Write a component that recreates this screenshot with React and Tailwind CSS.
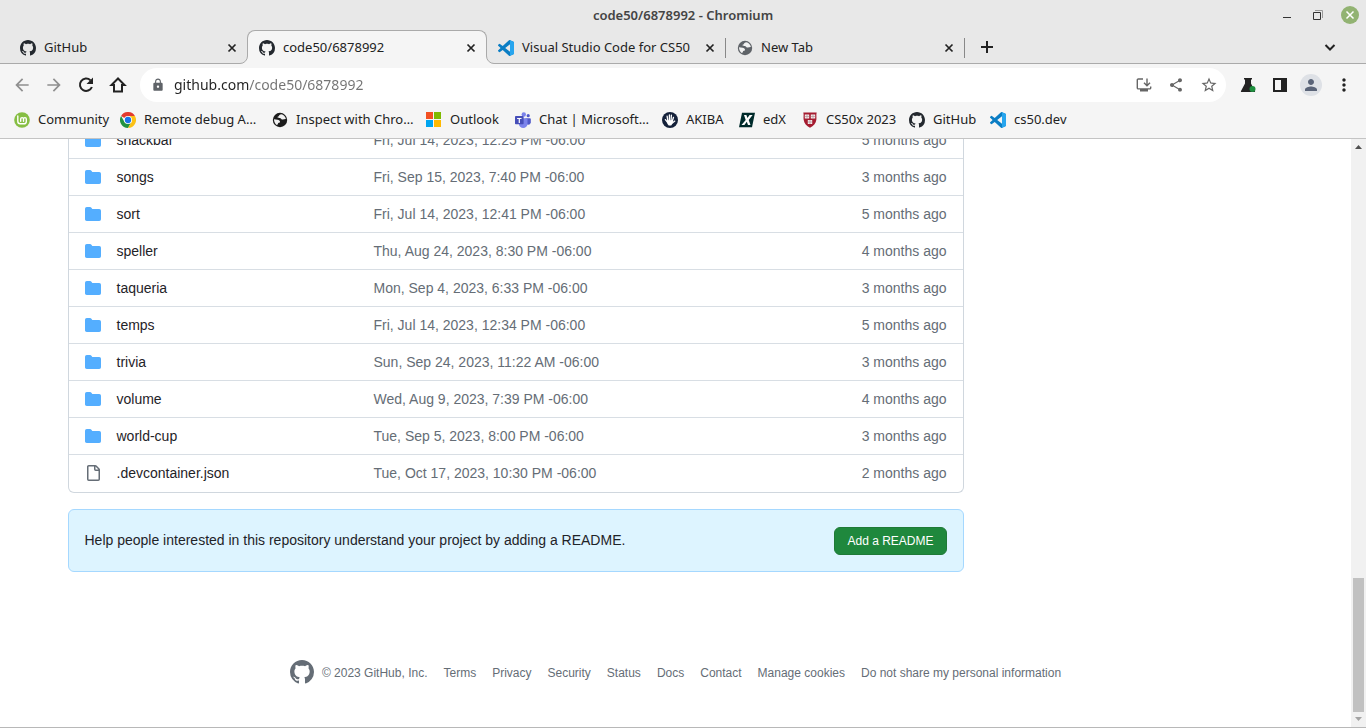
import React from "react";
import { MdArrowBack, MdArrowForward, MdLock, MdShare, MdStarBorder, MdPerson, MdMoreVert } from "react-icons/md";

function GitHubMark({ className }) {
  return (
    <svg viewBox="0 0 16 16" fill="currentColor" className={className} aria-hidden="true">
      <path d="M8 0c4.42 0 8 3.58 8 8a8.013 8.013 0 0 1-5.45 7.59c-.4.08-.55-.17-.55-.38 0-.27.01-1.13.01-2.2 0-.75-.25-1.23-.54-1.48 1.78-.2 3.65-.88 3.65-3.95 0-.88-.31-1.59-.82-2.15.08-.2.36-1.02-.08-2.12 0 0-.67-.22-2.2.82-.64-.18-1.32-.27-2-.27-.68 0-1.36.09-2 .27-1.53-1.03-2.2-.82-2.2-.82-.44 1.1-.16 1.92-.08 2.12-.51.56-.82 1.28-.82 2.15 0 3.06 1.86 3.75 3.64 3.95-.23.2-.44.55-.51 1.07-.46.21-1.61.55-2.33-.66-.15-.24-.6-.83-1.23-.82-.67.01-.27.38.01.53.34.19.73.9.82 1.13.16.45.68 1.31 2.69.94 0 .67.01 1.3.01 1.49 0 .21-.15.45-.55.38A7.995 7.995 0 0 1 0 8c0-4.42 3.58-8 8-8Z" />
    </svg>
  );
}

const VS_PATH =
  "M23.15 2.587L18.21.21a1.494 1.494 0 0 0-1.705.29l-9.46 8.63-4.12-3.128a.999.999 0 0 0-1.276.057L.327 7.261A1 1 0 0 0 .326 8.74L3.899 12 .326 15.26a1 1 0 0 0 .001 1.479L1.65 17.94a.999.999 0 0 0 1.276.057l4.12-3.128 9.46 8.63a1.492 1.492 0 0 0 1.704.29l4.942-2.377A1.5 1.5 0 0 0 24 20.06V3.939a1.5 1.5 0 0 0-.85-1.352zm-5.146 14.861L10.826 12l7.178-5.448v10.896z";

function VSCodeIcon() {
  const id = React.useId();
  return (
    <svg viewBox="0 0 24 24" className="size-4 shrink-0" aria-hidden="true">
      <clipPath id={id}>
        <path d="M18 0h6v24h-6z" />
      </clipPath>
      <path d={VS_PATH} fill="#0a7dc4" />
      <path d={VS_PATH} fill="#27a5ee" clipPath={`url(#${id})`} />
    </svg>
  );
}

function GlobeIcon({ className }) {
  return (
    <svg viewBox="0 0 16 16" className={className} aria-hidden="true">
      <circle cx="8" cy="8" r="7.2" fill="currentColor" />
      <path d="M9.2 2.2c-.9.4-2 .5-2.2 1.5-.1.8-1.5.5-1.5 1.4 0 .8.9.8 1.6.8 1.100 0 1.700.3 2.200 1.100.3.500 1.100.6 1.900.5.9-.1 1.500-.4 2.700-.4C13.700 4.600 11.600 2.600 9.200 2.200ZM2 7.200c1.300.2 2.500.4 3.600.5 1.400.2 2.400 1 2.400 2.100 0 .7-.5.9-1.200 1-.8.1-.8.700-.9 1.300-.1.500-.6.900-1.100.8C3 11.700 2 9.700 2 7.200Z" fill="#f1f1f1" />
    </svg>
  );
}

function MintIcon() {
  return (
    <svg viewBox="0 0 16 16" className="size-4 shrink-0" aria-hidden="true">
      <circle cx="8" cy="8" r="7.800" fill="#86be43" />
      <path d="M3.800 4v5.300c0 1.500 1 2.500 2.400 2.500h3.600c1.500 0 2.500-1 2.500-2.400V7c0-.8-.6-1.400-1.400-1.400S9.500 6.200 9.500 7v2.300M9.500 7c0-.8-.6-1.400-1.400-1.400S6.700 6.200 6.700 7v2.300" fill="none" stroke="#fff" strokeWidth="1.400" strokeLinecap="round" />
    </svg>
  );
}

function ChromeIcon() {
  return (
    <svg viewBox="0 0 48 48" className="size-4 shrink-0" aria-hidden="true">
      <path d="M24 24 3.200 12A24 24 0 0 1 44.800 12Z" fill="#e33b2e" />
      <path d="M3.200 12A24 24 0 0 0 24 48L34.400 30 24 24 13.600 30Z" fill="#229342" />
      <path d="M24 12H44.800A24 24 0 0 1 24 48L34.400 30Z" fill="#fbc116" />
      <circle cx="24" cy="24" r="12" fill="#fff" />
      <circle cx="24" cy="24" r="9.500" fill="#1a73e8" />
    </svg>
  );
}

function OutlookIcon() {
  return (
    <svg viewBox="0 0 16 16" className="size-4 shrink-0" aria-hidden="true">
      <path d="M0 0h7v7H0z" fill="#f25022" />
      <path d="M8 0h7v7H8z" fill="#7fba00" />
      <path d="M0 8h7v7H0z" fill="#00a4ef" />
      <path d="M8 8h7v7H8z" fill="#ffb900" />
    </svg>
  );
}

function TeamsIcon() {
  return (
    <svg viewBox="0 0 16 16" className="size-4 shrink-0" aria-hidden="true">
      <circle cx="13.200" cy="3.700" r="1.600" fill="#5059c9" />
      <path d="M10.500 6.200h4.400c.5 0 .9.400.9.900v3.500a2.700 2.700 0 0 1-5.300 0Z" fill="#5059c9" />
      <circle cx="8.800" cy="2.500" r="2.200" fill="#7b83eb" />
      <path d="M5.300 6.200h6.500c.4 0 .7.300.7.700v4.800a4.300 4.300 0 0 1-8.600 0V7z" fill="#7b83eb" />
      <rect x="0" y="4" width="8.600" height="8.200" rx=".8" fill="#464eb8" />
      <path d="M2.100 5.900h4.400v1.200H4.900v4H3.700v-4H2.100Z" fill="#fff" />
    </svg>
  );
}

function AkibaIcon() {
  return (
    <svg viewBox="0 0 16 16" className="size-4 shrink-0" aria-hidden="true">
      <circle cx="8" cy="8" r="8" fill="#14213a" />
      <path d="M5.200 8.300h5.400l-.4 3.800-1 1.400H6.700l-1.200-1.400Z" fill="#fff" />
      <path d="m5.900 9.300-.8-5.200M7.400 9V2.900M9 9l.4-5.800M10.200 9.500l1.300-4.200M6.100 11 3.400 7.600M10 11.300l2.800-2.200" stroke="#fff" strokeWidth="1.300" strokeLinecap="round" fill="none" />
    </svg>
  );
}

function EdxIcon() {
  return (
    <svg viewBox="0 0 16 16" className="size-4 shrink-0" aria-hidden="true">
      <path d="M3 .8h13l-3 14.400H0Z" fill="#002b2b" />
      <path d="M5 3h2.400l1 2.900L10.600 3h3L9.700 8l1.800 5H9L7.800 9.800 5.400 13H2.500L6.700 8Z" fill="#fff" />
    </svg>
  );
}

function HarvardIcon() {
  return (
    <svg viewBox="0 0 16 16" className="size-4 shrink-0" aria-hidden="true">
      <path d="M1.300.4h13.400c-.7 2.500 0 4.500-.3 7.200-.5 4-2.900 6.400-6.400 8.200-3.500-1.800-5.900-4.200-6.400-8.200-.3-2.700.4-4.700-.3-7.200Z" fill="#a51c30" />
      <path d="M2.800 2.600h4.400v3.800H2.800zM8.800 2.600h4.400v3.800H8.800zM5.800 8h4.400v4H5.800z" fill="#f3e9ea" />
      <path d="M5 2.600v3.800M11 2.600v3.800M8 8v4M2.800 4.500h4.400M8.800 4.500h4.400M5.800 10h4.400" stroke="#a88589" strokeWidth=".6" />
    </svg>
  );
}

function CloseButton({ label }) {
  return (
    <button type="button" aria-label={label} className="flex size-4 shrink-0 items-center justify-center text-[#222]">
      <svg viewBox="0 0 16 16" className="size-4" fill="none" stroke="currentColor" strokeWidth="1.700" aria-hidden="true">
        <path d="m4.500 4.500 7 7m0-7-7 7" />
      </svg>
    </button>
  );
}

const tabs = [
  { title: "GitHub", icon: <GitHubMark className="size-4 shrink-0 text-[#24292f]" /> },
  { title: "code50/6878992", icon: <GitHubMark className="size-4 shrink-0 text-[#24292f]" />, active: true },
  { title: "Visual Studio Code for CS50", icon: <VSCodeIcon />, divider: true },
  { title: "New Tab", icon: <GlobeIcon className="size-4 shrink-0 text-[#5f6368]" />, divider: true },
];

const bookmarks = [
  { title: "Community", icon: <MintIcon />, width: "w-[106px]" },
  { title: "Remote debug A…", icon: <ChromeIcon />, width: "w-[152px]" },
  { title: "Inspect with Chro…", icon: <GlobeIcon className="size-4 shrink-0 text-[#1c1c1c]" />, width: "w-[154px]" },
  { title: "Outlook", icon: <OutlookIcon />, width: "w-[89px]" },
  { title: "Chat | Microsoft…", icon: <TeamsIcon />, width: "w-[147px]" },
  { title: "AKIBA", icon: <AkibaIcon />, width: "w-[77px]" },
  { title: "edX", icon: <EdxIcon />, width: "w-[63px]" },
  { title: "CS50x 2023", icon: <HarvardIcon />, width: "w-[107px]" },
  { title: "GitHub", icon: <GitHubMark className="size-4 shrink-0 text-[#24292f]" />, width: "w-[81px]" },
  { title: "cs50.dev", icon: <VSCodeIcon />, width: "w-[81px]" },
];

const files = [
  ["snackbar", "Fri, Jul 14, 2023, 12:25 PM -06:00", "5 months ago"],
  ["songs", "Fri, Sep 15, 2023, 7:40 PM -06:00", "3 months ago"],
  ["sort", "Fri, Jul 14, 2023, 12:41 PM -06:00", "5 months ago"],
  ["speller", "Thu, Aug 24, 2023, 8:30 PM -06:00", "4 months ago"],
  ["taqueria", "Mon, Sep 4, 2023, 6:33 PM -06:00", "3 months ago"],
  ["temps", "Fri, Jul 14, 2023, 12:34 PM -06:00", "5 months ago"],
  ["trivia", "Sun, Sep 24, 2023, 11:22 AM -06:00", "3 months ago"],
  ["volume", "Wed, Aug 9, 2023, 7:39 PM -06:00", "4 months ago"],
  ["world-cup", "Tue, Sep 5, 2023, 8:00 PM -06:00", "3 months ago"],
  [".devcontainer.json", "Tue, Oct 17, 2023, 10:30 PM -06:00", "2 months ago"],
];

const footerLinks = ["Terms", "Privacy", "Security", "Status", "Docs", "Contact", "Manage cookies", "Do not share my personal information"];

function TitleBar() {
  return (
    <div className="grid h-[30px] shrink-0 grid-cols-[1fr_auto_1fr] items-center">
      <span />
      <h1 className="pt-0.5 text-[13px] font-semibold text-[#444]">code50/6878992 - Chromium</h1>
      <div className="flex items-center justify-end gap-[13px] pr-[7px] text-[#333]">
        <button type="button" aria-label="Minimize" className="size-[18px]">
          <svg viewBox="0 0 18 18" className="size-[18px]"><path d="M4 11h8v1H4z" fill="currentColor" /></svg>
        </button>
        <button type="button" aria-label="Restore" className="size-[18px]">
          <svg viewBox="0 0 18 18" className="size-[18px]" fill="none" stroke="currentColor">
            <path d="M3.500 6.500h7v7h-7z" />
            <path d="M5 4.500h7.500V12" stroke="#999" />
          </svg>
        </button>
        <button type="button" aria-label="Close window" className="flex size-[18px] items-center justify-center rounded-full bg-[#92b372] text-white">
          <svg viewBox="0 0 18 18" className="size-[18px]" fill="none" stroke="currentColor" strokeWidth="1.500"><path d="m5.500 5.500 7 7m0-7-7 7" /></svg>
        </button>
      </div>
    </div>
  );
}

function TabStrip() {
  return (
    <div className="flex h-[34px] shrink-0">
      <div className="w-2 border-b border-[#aaa]" />
      {tabs.map((t, i) =>
        t.active ? (
          <div key={t.title} className="relative flex w-[240px] items-center rounded-t-lg border border-b-0 border-[#aaa] bg-[#f5f5f5] pr-[7px] pl-[11px]">
            <svg viewBox="0 0 8 8" className="absolute bottom-0 -left-2 size-2" aria-hidden="true">
              <path d="M8 0v8H0v-.5A7.500 7.500 0 0 0 7.500 0Z" fill="#f5f5f5" />
              <path d="M0 7.500A7.500 7.500 0 0 0 7.500 0" fill="none" stroke="#aaa" />
            </svg>
            <svg viewBox="0 0 8 8" className="absolute -right-2 bottom-0 size-2" aria-hidden="true">
              <path d="M0 0v8h8v-.5A7.500 7.500 0 0 1 .5 0Z" fill="#f5f5f5" />
              <path d="M8 7.500A7.500 7.500 0 0 1 .5 0" fill="none" stroke="#aaa" />
            </svg>
            <a href="#tab" className="flex min-w-0 flex-1 items-center gap-2 whitespace-nowrap">{t.icon}{t.title}</a>
            <CloseButton label="Close code50/6878992" />
          </div>
        ) : (
          <div key={t.title} className={"flex w-[239px] items-center border-b border-[#aaa] pt-0.5 " + (i === 0 ? "pr-[7px] pl-3" : "pl-[11px]")}>
            <a href="#tab" className="flex min-w-0 flex-1 items-center gap-2 whitespace-nowrap">{t.icon}{t.title}</a>
            <CloseButton label={"Close " + t.title} />
            {t.divider && <span className="ml-[7px] h-5 w-px bg-[#888]" />}
          </div>
        )
      )}
      <div className="flex flex-1 items-center justify-between border-b border-[#aaa] pt-px pr-7 pl-[14px] text-[#222]">
        <button type="button" aria-label="New tab" className="size-4">
          <svg viewBox="0 0 16 16" className="size-4" stroke="currentColor" strokeWidth="2"><path d="M8 2v12M2 8h12" /></svg>
        </button>
        <button type="button" aria-label="Search tabs" className="size-4">
          <svg viewBox="0 0 16 16" className="size-4" fill="none" stroke="currentColor" strokeWidth="2"><path d="m3.500 6 4.500 4.500L12.500 6" /></svg>
        </button>
      </div>
    </div>
  );
}

function Toolbar() {
  return (
    <div className="flex h-[42px] shrink-0 items-center bg-[#f5f5f5] px-3">
      <div className="flex items-center gap-3 text-[#222]">
        <button type="button" aria-label="Back" className="text-[#8f8f8f]"><MdArrowBack className="size-5" /></button>
        <button type="button" aria-label="Forward" className="text-[#8f8f8f]"><MdArrowForward className="size-5" /></button>
        <button type="button" aria-label="Reload">
          <svg viewBox="0 0 20 20" className="size-5">
            <path d="M15.900 12A6.200 6.200 0 1 1 14.400 5.200" fill="none" stroke="currentColor" strokeWidth="2" />
            <path d="M17 2.500V9h-6.500Z" fill="currentColor" />
          </svg>
        </button>
        <button type="button" aria-label="Home">
          <svg viewBox="0 0 20 20" className="size-5" fill="none" stroke="currentColor" strokeWidth="2"><path d="M10 3.500 3.500 10H6v6.500h8V10h2.500Z" /></svg>
        </button>
      </div>
      <div className="ml-3 flex h-[34px] flex-1 items-center rounded-full bg-white pr-2 pl-[11px] text-[#666]">
        <MdLock className="size-[14px] text-[#5f6368]" />
        <input
          aria-label="Address and search bar"
          defaultValue="github.com/code50/6878992"
          className="ml-[9px] min-w-0 flex-1 bg-[linear-gradient(90deg,#222_75px,#737373_75px)] bg-clip-text text-sm text-transparent outline-none"
        />
        <div className="flex items-center gap-4">
          <button type="button" aria-label="Install app" className="size-4">
            <svg viewBox="0 0 16 16" className="size-4" fill="none" stroke="currentColor" strokeWidth="1.400">
              <path d="M7 2H2.300c-.6 0-1 .4-1 1v8c0 .5.4.9 1 .9h11.400c.6 0 1-.4 1-.9V9.500M11 1.500v6.800M8 5.800l3 3 3-3" />
              <path d="M4 12h8v2.500H4z" fill="currentColor" stroke="none" />
            </svg>
          </button>
          <button type="button" aria-label="Share"><MdShare className="size-4" /></button>
          <button type="button" aria-label="Bookmark this page"><MdStarBorder className="size-[18px]" /></button>
        </div>
      </div>
      <div className="ml-[14px] flex items-center gap-3 text-[#222]">
        <button type="button" aria-label="Experiments" className="size-4">
          <svg viewBox="0 0 16 16" className="size-4">
            <path d="M4 1h8v1.500h-1v4l4 7.500c.3.600-.1 1-.7 1H1.700c-.7 0-1-.5-.7-1l4-7.500v-4H4Z" fill="currentColor" />
            <circle cx="12.500" cy="12" r="3" fill="#1e8e3e" />
          </svg>
        </button>
        <button type="button" aria-label="Side panel" className="ml-1 size-4">
          <svg viewBox="0 0 16 16" className="size-4"><path d="M1 1h14v14H1Zm2 2v10h6V3Z" fill="currentColor" fillRule="evenodd" /></svg>
        </button>
        <button type="button" aria-label="Profile" className="flex size-[22px] items-center justify-center rounded-full bg-[#dee1e6] text-[#5a6478]"><MdPerson className="size-[18px]" /></button>
        <button type="button" aria-label="Menu"><MdMoreVert className="size-5" /></button>
      </div>
    </div>
  );
}

function BookmarksBar() {
  return (
    <nav aria-label="Bookmarks" className="flex h-[33px] shrink-0 border-b border-[#c4c4c4] bg-[#f5f5f5] pb-1 pl-[14px]">
      {bookmarks.map((b) => (
        <a key={b.title} href="#bookmark" className={"flex shrink-0 items-center gap-2 whitespace-nowrap " + b.width}>
          {b.icon}
          {b.title}
        </a>
      ))}
    </nav>
  );
}

function FolderIcon() {
  return (
    <svg viewBox="0 0 16 16" className="size-4" fill="#54aeff" aria-hidden="true">
      <path d="M1.750 1A1.750 1.750 0 0 0 0 2.750v10.500C0 14.216.784 15 1.750 15h12.500A1.750 1.750 0 0 0 16 13.250v-8.500A1.750 1.750 0 0 0 14.250 3H7.500a.25.25 0 0 1-.2-.1l-.9-1.200C6.070 1.260 5.550 1 5 1H1.750Z" />
    </svg>
  );
}

function FileIcon() {
  return (
    <svg viewBox="0 0 16 16" className="size-4" fill="#656d76" aria-hidden="true">
      <path d="M2 1.750C2 .784 2.784 0 3.750 0h6.586c.464 0 .909.184 1.237.513l2.914 2.914c.329.328.513.773.513 1.237v9.586A1.750 1.750 0 0 1 13.250 16h-9.500A1.750 1.750 0 0 1 2 14.250Zm1.750-.25a.25.25 0 0 0-.25.25v12.500c0 .138.112.25.25.25h9.500a.25.25 0 0 0 .25-.25V6h-2.750A1.750 1.750 0 0 1 9 4.250V1.500Zm6.750.062V4.250c0 .138.112.25.25.25h2.688l-.011-.013-2.914-2.914-.013-.011Z" />
    </svg>
  );
}

function FileTable() {
  return (
    <div className="rounded-b-md border border-t-0 border-[#d0d7de]">
      <table className="w-full border-collapse">
        <tbody>
          {files.map(([name, date, age]) => (
            <tr key={name} className="h-[37px] border-t border-[#d8dee4]">
              <td className="w-12 pl-4">{name.startsWith(".") ? <FileIcon /> : <FolderIcon />}</td>
              <td className="w-[257px]"><a href="#file">{name}</a></td>
              <td className="text-[#656d76]">{date}</td>
              <td className="pr-4 text-right text-[#656d76]">{age}</td>
            </tr>
          ))}
        </tbody>
      </table>
    </div>
  );
}

function Scrollbar() {
  return (
    <div className="flex w-[15px] shrink-0 flex-col items-center justify-between bg-[#f1f1f1]">
      <svg viewBox="0 0 15 15" className="size-[15px]" aria-hidden="true"><path d="M4 10h7L7.500 6Z" fill="#505050" /></svg>
      <div className="flex flex-col items-center">
        <div className="h-[134px] w-[11px] bg-[#c1c1c1]" />
        <svg viewBox="0 0 15 15" className="size-[15px]" aria-hidden="true"><path d="M4 5h7L7.500 9Z" fill="#a3a3a3" /></svg>
      </div>
    </div>
  );
}

export default function App() {
  return (
    <div className="flex h-screen flex-col overflow-hidden bg-[#e8e8e8] font-['Noto_Sans',sans-serif] text-[13px] text-[#222]">
      <TitleBar />
      <TabStrip />
      <Toolbar />
      <BookmarksBar />
      <div className="flex min-h-0 flex-1 border-b border-[#b8b8b8] bg-white font-['Liberation_Sans',Arial,sans-serif] text-sm text-[#1f2328]">
        <div className="min-w-0 flex-1 overflow-hidden">
          <main className="mx-auto -mt-[18px] grid max-w-[1280px] grid-cols-[minmax(0,1fr)_296px] gap-6 px-8">
            <div>
              <FileTable />
              <div className="mt-4 flex justify-between rounded-md border border-[#a5d8ff] bg-[#ddf4ff] px-4 pb-4">
                <p className="pt-5">Help people interested in this repository understand your project by adding a README.</p>
                <button type="button" className="mt-[17px] h-7 rounded-md border border-[#1f7a37] bg-[#1f883d] px-3 text-xs text-white">Add a README</button>
              </div>
            </div>
          </main>
          <footer className="mt-[88px] flex items-center justify-center gap-2 text-xs text-[#656d76]">
            <a href="#home" aria-label="GitHub home"><GitHubMark className="size-6" /></a>
            <div className="flex gap-4 pt-0.5">
              <span>© 2023 GitHub, Inc.</span>
              {footerLinks.map((l) => (
                <a key={l} href="#footer">{l}</a>
              ))}
            </div>
          </footer>
        </div>
        <Scrollbar />
      </div>
    </div>
  );
}
